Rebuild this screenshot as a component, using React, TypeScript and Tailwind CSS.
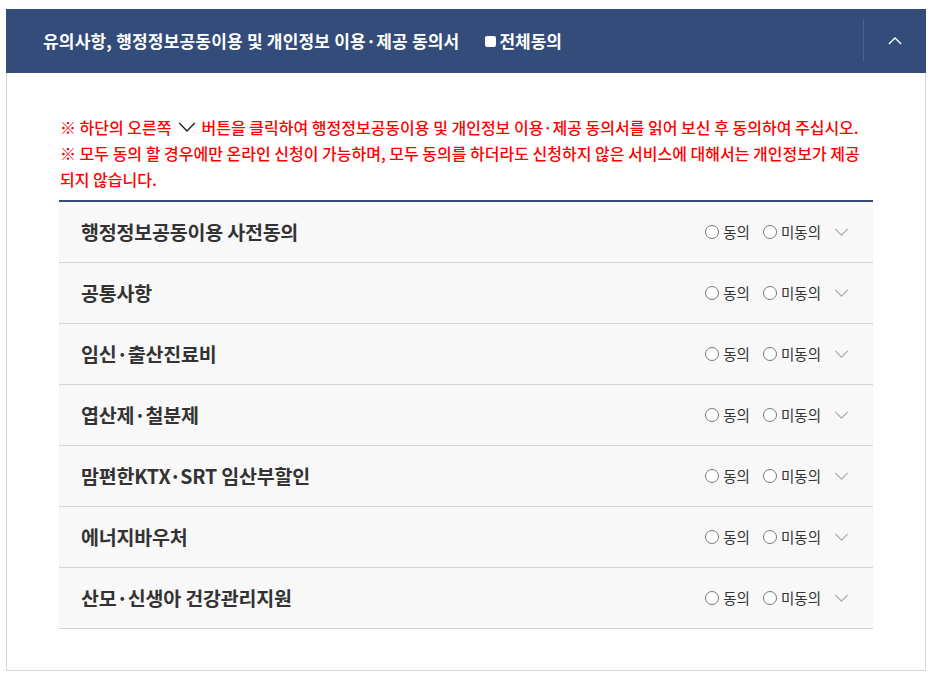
import { useState } from "react";

const FONT = { fontFamily: '"Noto Sans CJK KR", "Noto Sans", sans-serif' };

const ITEMS = [
  "행정정보공동이용 사전동의",
  "공통사항",
  "임신·출산진료비",
  "엽산제·철분제",
  "맘편한KTX·SRT 임산부할인",
  "에너지바우처",
  "산모·신생아 건강관리지원",
];

function ChevronDown({ className }: { className?: string }) {
  return (
    <svg viewBox="0 0 16 9" className={className} fill="none" stroke="currentColor" strokeWidth="1.3">
      <path d="M1 1l7 7 7-7" />
    </svg>
  );
}

function Radio({ label }: { label: string }) {
  return (
    <label className="flex items-center gap-[4px]">
      <span className="h-[14px] w-[14px] rounded-full border border-[#777] bg-white" />
      <span className="text-[14.5px] text-[#333]">{label}</span>
    </label>
  );
}

function ConsentRow({ title }: { title: string }) {
  return (
    <li className="flex h-[61px] items-center justify-between border-b border-[#d4d4d4] bg-[#f8f8f8] pl-[22px] pr-[24px]">
      <span className="text-[19.5px] font-semibold tracking-[-0.2px] text-[#333]">{title}</span>
      <div className="flex items-center">
        <Radio label="동의" />
        <span className="w-[13px]" />
        <Radio label="미동의" />
        <ChevronDown className="ml-[13px] h-[8px] w-[15px] text-[#aaa]" />
      </div>
    </li>
  );
}

export default function App() {
  const [open] = useState(true);

  return (
    <div className="min-h-screen bg-white pl-[6px] pr-[9px] pt-[9px]" style={FONT}>
      <div className="border border-t-0 border-[#d6d6d6] bg-white">
        <div className="-mx-px flex h-[64px] items-center bg-[#334c79] text-white">
          <div className="flex flex-1 items-center pl-[37px]">
            <h2 className="text-[17px] font-bold tracking-[0.2px]">
              유의사항, 행정정보공동이용 및 개인정보 이용·제공 동의서
            </h2>
            <label className="ml-[26px] flex items-center gap-[3px]">
              <span className="h-[11px] w-[11px] rounded-[2px] bg-white" />
              <span className="text-[17px] font-bold">전체동의</span>
            </label>
          </div>
          <div className="h-[42px] w-px bg-[#4b6390]" />
          <button className="flex h-full w-[62px] items-center justify-center">
            <svg viewBox="0 0 16 9" className="h-[8px] w-[14px]" fill="none" stroke="white" strokeWidth="1.5">
              <path d={open ? "M1 8l7-7 7 7" : "M1 1l7 7 7-7"} />
            </svg>
          </button>
        </div>

        <div className="px-[52px] pb-[41px] pt-[41px]">
          <div className="pl-[1px] text-[16px] font-medium leading-[26px] text-[#f00]">
            <p className="flex items-center whitespace-nowrap">
              <span>※ 하단의 오른쪽</span>
              <ChevronDown className="mx-[6px] h-[10px] w-[18px] text-[#222]" />
              <span>버튼을 클릭하여 행정정보공동이용 및 개인정보 이용·제공 동의서를 읽어 보신 후 동의하여 주십시오.</span>
            </p>
            <p>
              ※ 모두 동의 할 경우에만 온라인 신청이 가능하며, 모두 동의를 하더라도 신청하지 않은 서비스에 대해서는 개인정보가 제공
              <br />
              되지 않습니다.
            </p>
          </div>

          <ul className="mt-[8px] border-t-2 border-[#334c79]">
            {ITEMS.map((t) => (
              <ConsentRow key={t} title={t} />
            ))}
          </ul>
        </div>
      </div>
    </div>
  );
}
